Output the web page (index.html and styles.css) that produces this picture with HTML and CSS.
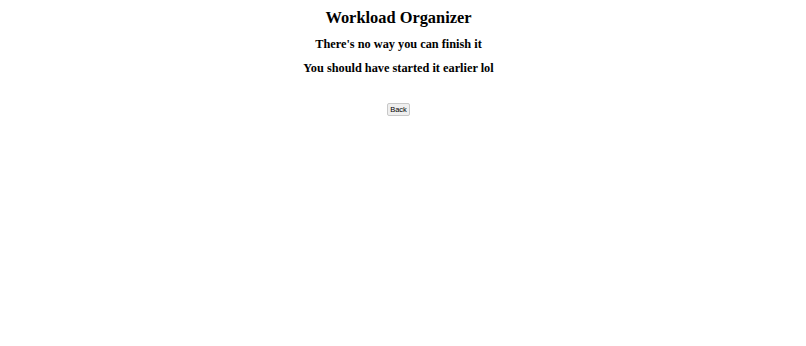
FILE: index.html
```html
<!DOCTYPE html>
<html lang="en">
<head>
  <meta charset="UTF-8" />
  <meta name="viewport" content="width=device-width, initial-scale=1.0" />
  <title>Workload Organizer</title>
  <link rel="stylesheet" href="styles.css">
</head>
<body>
  <div class="page">
    <h1 class="title">Workload Organizer</h1>
    <h2 class="line">There's no way you can finish it</h2>
    <h2 class="line second">You should have started it earlier lol</h2>
    <button class="back" onclick="history.back()">Back</button>
  </div>
</body>
</html>
```

FILE: styles.css
```css
* {
  margin: 0;
  padding: 0;
  box-sizing: border-box;
}
body, html {
  height: 100%;
  background: #fff;
  font-family: 'Liberation Serif', 'Times New Roman', serif;
  color: #000;
}

.page {
  display: flex;
  flex-direction: column;
  align-items: center;
  padding-top: 7px;
  padding-right: 9px;
  text-align: center;
}

.title {
  font-size: 16.4px;
  line-height: 22px;
  font-weight: bold;
}

.line {
  font-size: 12.3px;
  line-height: 18px;
  font-weight: bold;
  margin-top: 6px;
}
.line.second {
  margin-top: 6px;
}

.back {
  margin-top: 26px;
  height: 13px;
  padding: 0 2px;
  font-family: 'Liberation Sans', Arial, sans-serif;
  font-size: 7.5px;
  line-height: 11px;
  background: #efefef;
  border: 1px solid #c8c8c8;
  border-radius: 2px;
  color: #000;
}
```
